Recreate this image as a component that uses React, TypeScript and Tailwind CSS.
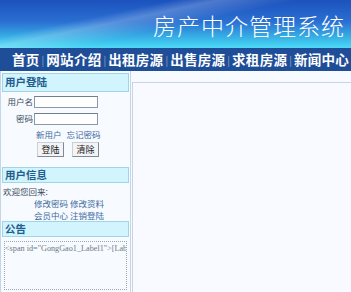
import React from 'react'

// 房产中介管理系统 — portal home: banner, nav bar, left sidebar boxes, empty main area.

const NAV = ['首页', '网站介绍', '出租房源', '出售房源', '求租房源', '新闻中心']

const cjk = { fontFamily: '"Noto Sans CJK SC", "Noto Sans", sans-serif' }

export default function App() {
  return (
    <div className="w-[351px] h-[292px] overflow-hidden bg-[#f7fafe]" style={cjk}>
      {/* Banner */}
      <div className="relative h-[48px] bg-[linear-gradient(to_bottom,#1c52bd_0%,#2a6fd2_45%,#3bbfeb_85%,#4fd9f6_100%)] overflow-hidden">
        <div className="absolute inset-0 bg-[linear-gradient(168deg,transparent_0%,transparent_30%,rgba(255,255,255,0.22)_38%,transparent_52%)]" />
        <div className="relative flex h-full items-center justify-end pr-[6px] pt-[3px]">
          <span className="text-[23px] leading-none font-light tracking-[1px] text-white">房产中介管理系统</span>
        </div>
      </div>

      {/* Nav */}
      <div className="flex h-[23px] items-center bg-[#1f4e98] pl-[12px] whitespace-nowrap overflow-hidden">
        {NAV.map((item, i) => (
          <React.Fragment key={item}>
            {i > 0 && <span className="mx-[2px] text-[10px] leading-none text-[#8fa6cc]">|</span>}
            <span className="text-[13.5px] font-bold leading-none tracking-[0.3px] text-white">{item}</span>
          </React.Fragment>
        ))}
      </div>

      <div className="flex h-[221px]">
        {/* Left column */}
        <div className="w-[131px] shrink-0 border-x border-[#c6d6e6] bg-[#f7fafe] pt-[2px] flex flex-col">
          <div className="h-[19px]">
            <BoxHeader title="用户登陆" />
          </div>
          <div className="flex flex-col pt-[2px]">
            <div className="flex items-center h-[13px] mt-[1px]">
              <span className="w-[33px] text-right text-[8.5px] text-[#3a4a60] pr-[1px]">用户名</span>
              <div className="w-[64px] h-[12px] border border-[#8a98a8] border-t-[#6f7f90] bg-white" />
            </div>
            <div className="flex items-center h-[13px] mt-[4px]">
              <span className="w-[33px] text-right text-[8.5px] text-[#3a4a60] pr-[1px]">密码</span>
              <div className="w-[64px] h-[12px] border border-[#8a98a8] border-t-[#6f7f90] bg-white" />
            </div>
            <div className="flex gap-[5px] pl-[35px] mt-[4px] text-[8.5px] leading-[11px] text-[#3d6aa0]">
              <span>新用户</span>
              <span>忘记密码</span>
            </div>
            <div className="flex gap-[8px] pl-[36px] mt-[2px]">
              <Btn label="登陆" />
              <Btn label="清除" />
            </div>
          </div>

          <div className="mt-[10px] h-[16px]">
            <BoxHeader title="用户信息" />
          </div>
          <div className="text-[8.5px] leading-[12px] text-[#3a4a60] pl-[2px] pt-[2px]">欢迎您回来:</div>
          <div className="pl-[33px] text-[8.5px] leading-[12px] text-[#3d6aa0]">修改密码 修改资料</div>
          <div className="pl-[33px] text-[8.5px] leading-[12px] text-[#3d6aa0]">会员中心 注销登陆</div>

          <div className="mt-0 h-[16px]">
            <BoxHeader title="公告" />
          </div>
          <div className="mx-[3px] mt-[4px] flex-1 border border-dotted border-[#9aa8b8] overflow-hidden">
            <div
              className="whitespace-nowrap text-[8.2px] leading-[11px] text-[#6a7a8c] pt-[1px]"
              style={{ fontFamily: '"Liberation Serif", serif' }}
            >
              {'<span id="GongGao1_Label1">[Label]</span>'}
            </div>
          </div>
          <div className="h-[2px]" />
        </div>

        {/* Main */}
        <div className="flex-1 flex flex-col pl-[1px]">
          <div className="h-[11px]" />
          <div className="flex-1 border-l border-t border-[#c9d3e3] bg-[#f8faff]" />
        </div>
      </div>
    </div>
  )
}

function BoxHeader({ title }: { title: string }) {
  return (
    <div className="mx-[1px] h-full flex items-center border border-[#9fd6e6] bg-[#d2f4fc] pl-[2px]">
      <span className="text-[10.5px] font-bold leading-none text-[#1f5d8e]">{title}</span>
    </div>
  )
}

function Btn({ label }: { label: string }) {
  return (
    <div className="w-[27px] h-[15px] flex items-center justify-center border border-[#7f8a96] border-t-[#c9d0d8] border-l-[#c9d0d8] bg-[#f3f4f6] text-[9px] leading-none text-[#222]">
      {label}
    </div>
  )
}
